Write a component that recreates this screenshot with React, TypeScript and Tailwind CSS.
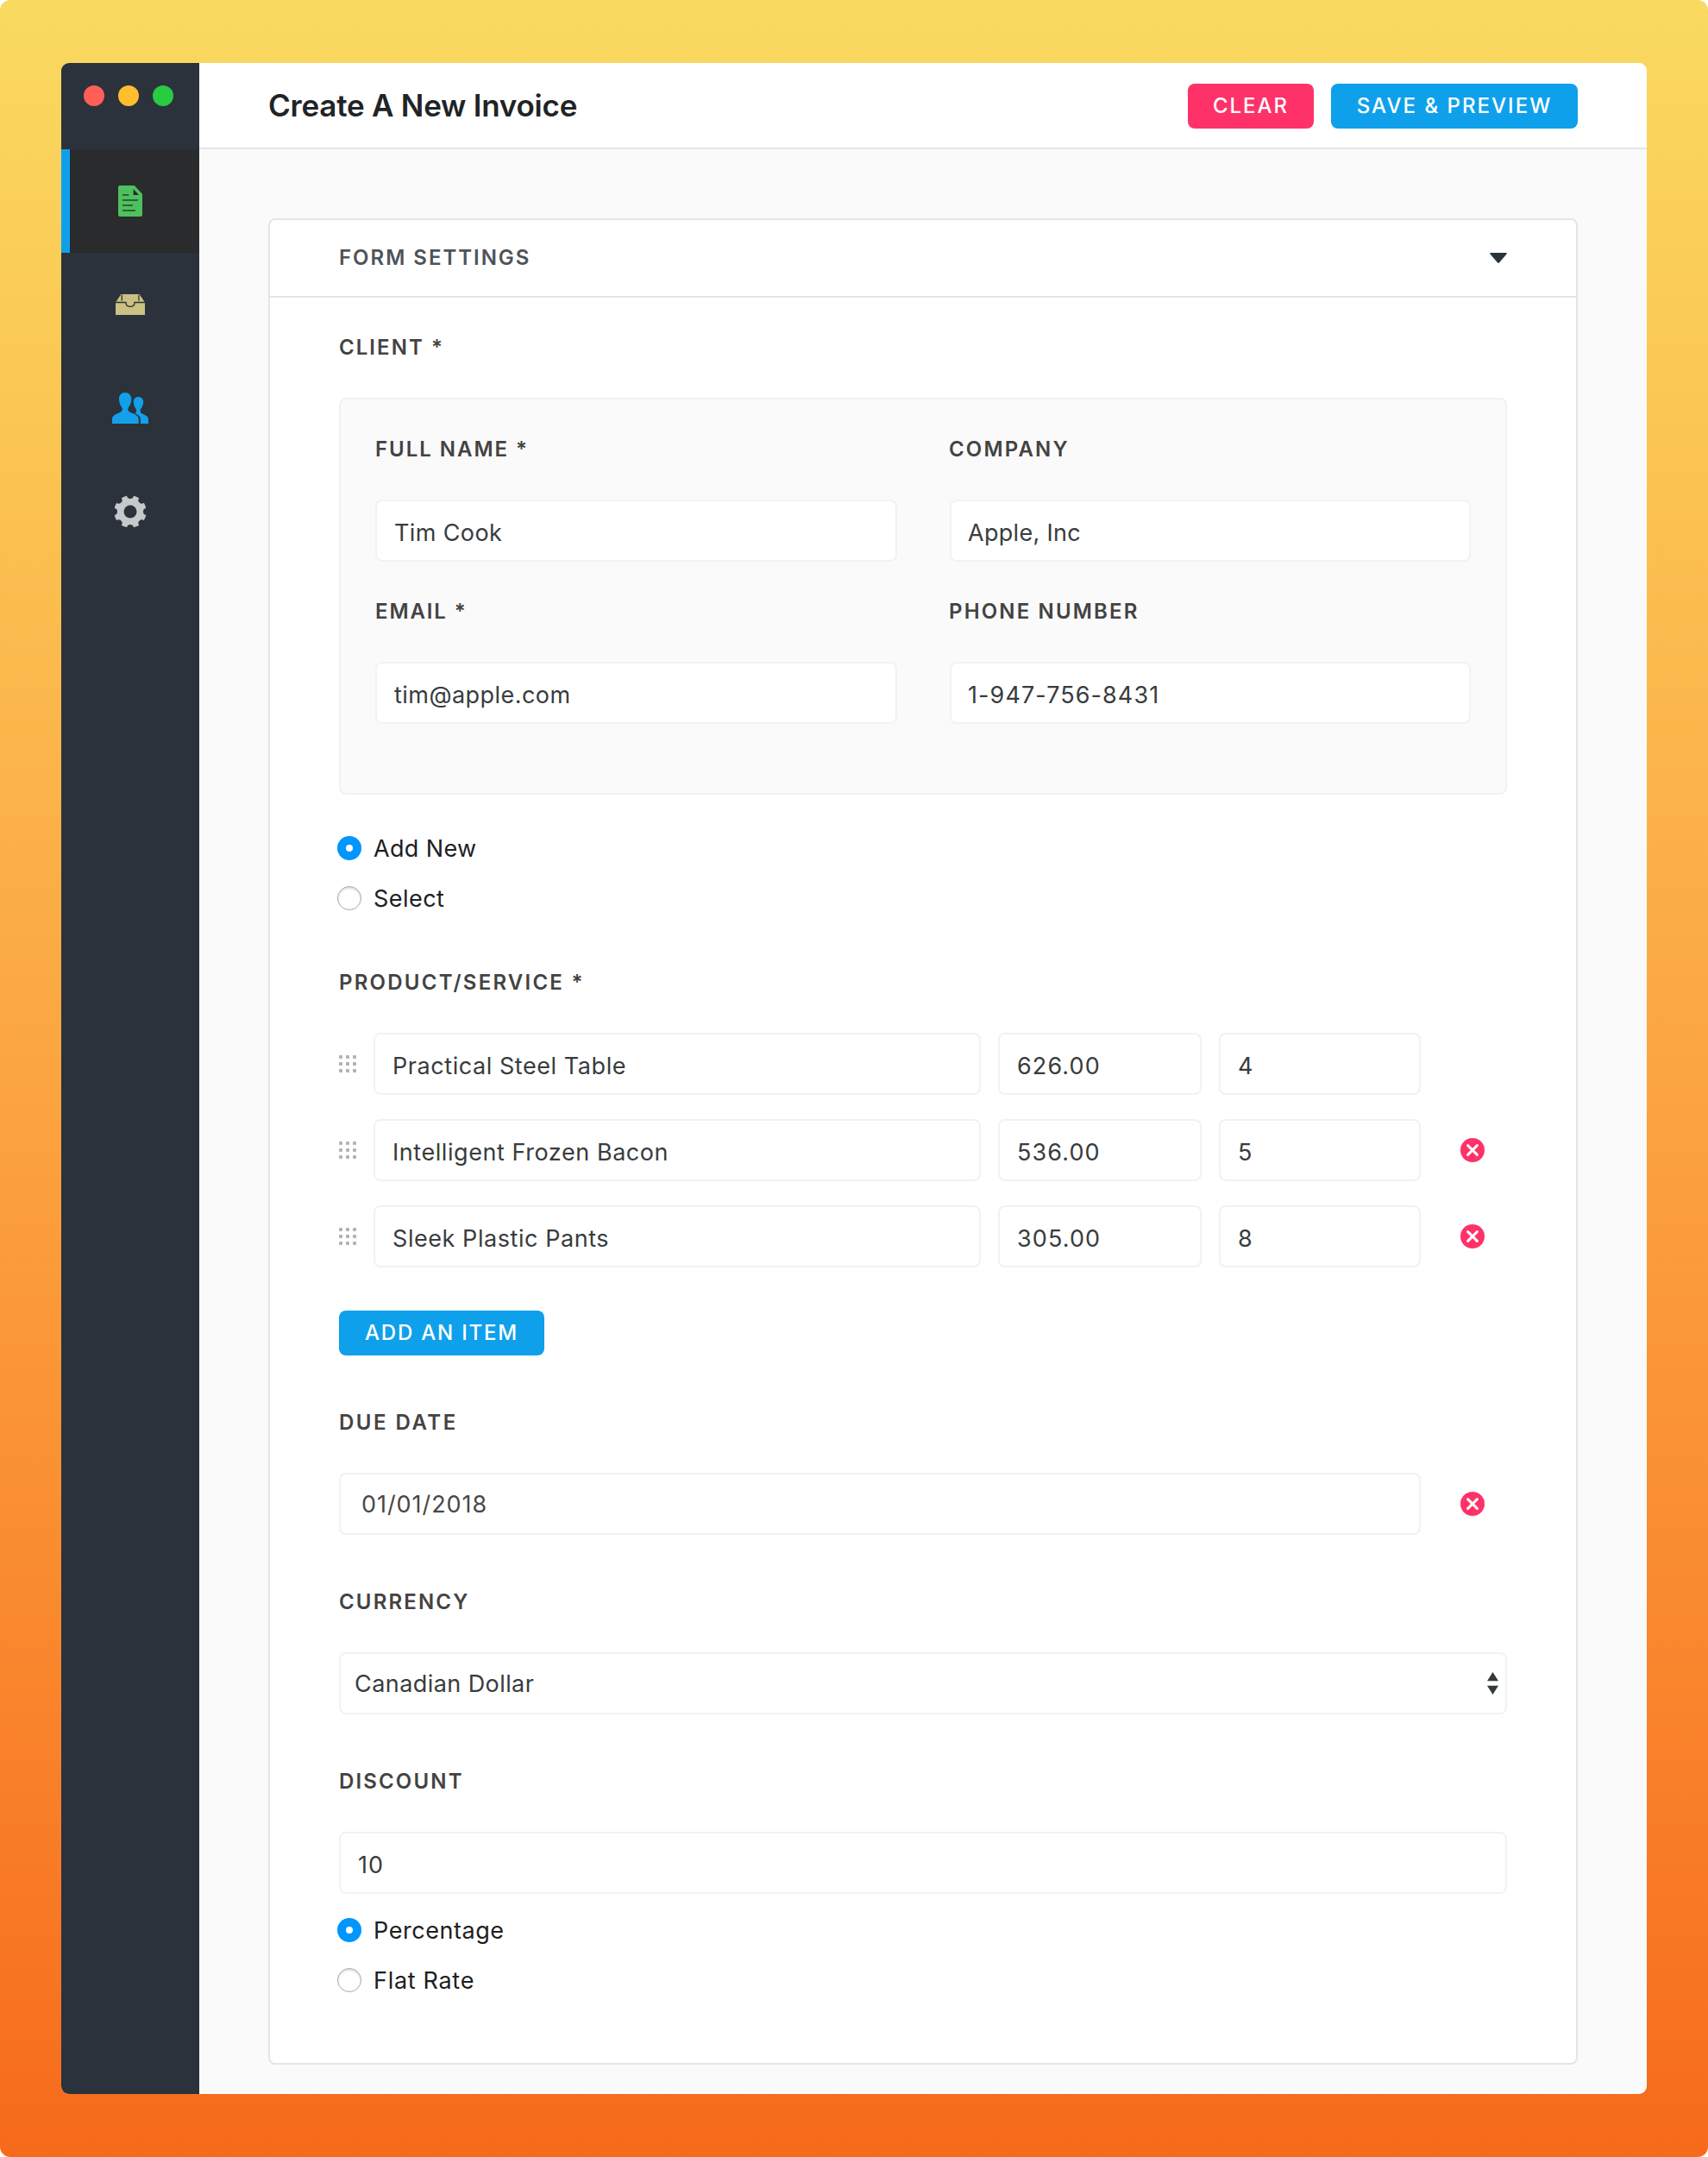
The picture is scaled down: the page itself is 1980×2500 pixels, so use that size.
import type { ReactNode } from 'react';
import clsx from 'clsx';

const ITEMS = [
  { id: 1, description: 'Practical Steel Table', price: '626.00', quantity: '4' },
  { id: 2, description: 'Intelligent Frozen Bacon', price: '536.00', quantity: '5' },
  { id: 3, description: 'Sleek Plastic Pants', price: '305.00', quantity: '8' },
];

const GEAR_NOTCHES = [0, 45, 90, 135, 180, 225, 270, 315];

function DocumentIcon() {
  return (
    <svg width="28" height="36" viewBox="0 0 28 36">
      <path
        d="M2 0H18.7L28 9.7V34a2 2 0 0 1-2 2H2a2 2 0 0 1-2-2V2a2 2 0 0 1 2-2z"
        fill="#4ec05e"
      />
      <path d="M17.6 4V11H24z" fill="#292b2c" />
      <path d="M5 11h7.3M5 17h18M5 23h12M5 29h15" stroke="#22442a" strokeWidth="1.3" fill="none" />
    </svg>
  );
}

function TrayIcon() {
  return (
    <svg width="34" height="24" viewBox="0 0 34 24">
      <path d="M6.4 0H27.6L34 9.5V24H0V9.5z" fill="#cac182" />
      <path
        d="M7.3 .8V7.4M26.9 .8V7.4M0 9.5H12C12 12.8 14.2 14.4 17 14.4S22 12.8 22 9.5H34"
        stroke="#2b323b"
        strokeWidth="1.3"
        fill="none"
      />
    </svg>
  );
}

function PeopleIcon() {
  return (
    <svg width="42" height="36" viewBox="0 0 42 36" fill="#12a0eb">
      <path d="M15 0C10.5 0 7.8 3 8 8.5C8.2 12.5 9.8 15.5 11.6 17.8C12 20.5 11.5 21.8 8.5 23.3C4.5 25 0 26.3 0 31V36H30.7V31C30.7 26.3 26 25 21.8 23.3C18.6 21.8 18.1 20.5 18.5 17.8C20.4 15.5 22 12.5 22.3 8.5C22.5 3 19.5 0 15 0Z" />
      <path d="M30.3 5C26.8 5 24.8 7.5 24.8 11C25 14.8 26.2 17 28 19.5C28.3 22 28 23.3 26.5 24.3C30 25.6 32.8 27.2 32.8 31V36H42V31.5C42 27.5 39 26.5 35.8 25C33 23.8 32.4 22.5 32.8 19.5C34.6 17 36 14.8 36.2 11C36.3 7.5 33.8 5 30.3 5Z" />
    </svg>
  );
}

function GearIcon() {
  return (
    <svg width="40" height="40" viewBox="-20 -20 40 40">
      <circle r="18.7" fill="#c4c9cb" />
      {GEAR_NOTCHES.map((angle) => (
        <circle key={angle} cy="-18.9" r="3.9" fill="#2b323b" transform={`rotate(${angle})`} />
      ))}
      <circle r="7.5" fill="#2b323b" />
    </svg>
  );
}

function RemoveButton() {
  return (
    <button className="size-7">
      <svg width="28" height="28" viewBox="0 0 28 28">
        <circle cx="14" cy="14" r="14" fill="#fe3269" />
        <path d="M8.6 8.6l10.8 10.8M19.4 8.6L8.6 19.4" stroke="#fff" strokeWidth="2.9" strokeLinecap="round" />
      </svg>
    </button>
  );
}

function DragHandle() {
  return (
    <div className="grid w-5 shrink-0 grid-cols-[4px_4px_4px] gap-1">
      {Array.from({ length: 9 }, (_, i) => (
        <span key={i} className="size-1 rounded-[1px] bg-[#b3b3b3]" />
      ))}
    </div>
  );
}

function TabItem({ active, children }: { active?: boolean; children: ReactNode }) {
  return (
    <a className={clsx('relative flex h-[120px] items-center justify-center', active && 'bg-[#292b2c]')}>
      {active && <span className="absolute inset-y-0 left-0 w-2.5 bg-[#0fa0eb]" />}
      {children}
    </a>
  );
}

function Button({ className, children }: { className: string; children: ReactNode }) {
  return (
    <button
      className={clsx(
        'flex h-[52px] items-center justify-center rounded-lg pb-px text-2xl font-medium whitespace-nowrap text-white',
        className
      )}
    >
      {children}
    </button>
  );
}

function Label({ className = 'tracking-[2.15px]', children }: { className?: string; children: ReactNode }) {
  return (
    <label className={clsx('mb-10 block h-[37px] pt-px text-2xl/9 font-semibold whitespace-nowrap text-[#434343]', className)}>
      {children}
    </label>
  );
}

function Field({ className, children }: { className?: string; children: ReactNode }) {
  return (
    <div
      className={clsx(
        'flex h-[72px] items-center rounded-lg border-2 border-[#f1f2f2] bg-white text-[27px] whitespace-nowrap text-[#383c3e]',
        className
      )}
    >
      {children}
    </div>
  );
}

function Radio({ checked, className, children }: { checked?: boolean; className: string; children: ReactNode }) {
  return (
    <label className={clsx('-ml-0.5 flex h-[58px] items-center gap-3.5 text-[27px] text-[#1d2022]', className)}>
      {checked ? (
        <span className="flex size-7 items-center justify-center rounded-full bg-[#0096fd]">
          <span className="size-2 rounded-full bg-white" />
        </span>
      ) : (
        <span className="size-7 rounded-full border border-[#a8a8a8] bg-white shadow-[inset_0_2px_2px_#dedede]" />
      )}
      <span className="pt-0.5">{children}</span>
    </label>
  );
}

function ClientFields() {
  return (
    <div className="grid h-[460px] grid-cols-[605px_605px] content-start gap-x-[60px] gap-y-[39px] rounded-lg border-2 border-[#f1f1f1] bg-[#fafafa] px-10 pt-[39px]">
      <div>
        <Label className="tracking-[1.97px]">FULL NAME *</Label>
        <Field className="px-5 pt-1.5 tracking-[0.38px]">Tim Cook</Field>
      </div>
      <div>
        <Label>COMPANY</Label>
        <Field className="ml-px px-[19px] pt-1.5 tracking-[0.3px]">Apple, Inc</Field>
      </div>
      <div>
        <Label className="tracking-[1.9px]">EMAIL *</Label>
        <Field className="px-5 pt-1.5 tracking-[0.46px]">tim@apple.com</Field>
      </div>
      <div>
        <Label>PHONE NUMBER</Label>
        <Field className="ml-px px-[19px] pt-1.5 tracking-[1.08px]">1-947-756-8431</Field>
      </div>
    </div>
  );
}

function ItemsList() {
  return (
    <div className="flex flex-col gap-7">
      {ITEMS.map((item, index) => (
        <div key={item.id} className="flex items-center gap-5">
          <DragHandle />
          <Field className="w-[704px] px-5 pt-1.5 tracking-[0.56px]">{item.description}</Field>
          <Field className="w-[236px] px-5 pt-1.5 tracking-[1.1px]">{item.price}</Field>
          <Field className="w-[234px] px-5 pt-1.5">{item.quantity}</Field>
          <div className="flex w-20 justify-center">{index > 0 && <RemoveButton />}</div>
        </div>
      ))}
    </div>
  );
}

export default function App() {
  return (
    <div className="flex h-[2500px] w-[1980px] rounded-xl bg-linear-to-b from-[#f9da60] to-[#f66a1b] pt-[73px] pl-[71px] font-['Inter',sans-serif]">
      <div className="flex h-[2354px] w-[1838px] overflow-hidden rounded-[9px] bg-[#fafafa]">
        <nav className="flex w-40 shrink-0 flex-col bg-[#2b323b]">
          <div className="flex h-[100px] justify-center gap-4 pt-[26px] pr-1">
            <span className="size-6 rounded-full bg-[#ff5f57]" />
            <span className="size-6 rounded-full bg-[#ffbe2f]" />
            <span className="size-6 rounded-full bg-[#28cb41]" />
          </div>
          <TabItem active>
            <DocumentIcon />
          </TabItem>
          <TabItem>
            <TrayIcon />
          </TabItem>
          <TabItem>
            <PeopleIcon />
          </TabItem>
          <TabItem>
            <GearIcon />
          </TabItem>
        </nav>

        <main className="flex-1">
          <header className="flex h-[100px] items-center justify-between border-b-2 border-[#e3e4e4] bg-white px-20 pt-0.5">
            <h1 className="pb-0.5 text-[35px] font-semibold tracking-[-0.23px] text-[#1f2427]">Create A New Invoice</h1>
            <div className="flex gap-5">
              <Button className="w-[146px] bg-[#fe3269] tracking-[2px]">CLEAR</Button>
              <Button className="w-[286px] bg-[#0fa0eb] tracking-[2.03px]">SAVE &amp; PREVIEW</Button>
            </div>
          </header>

          <section className="mx-20 mt-20 h-[2140px] rounded-lg border-2 border-[#e4e5e5] bg-white">
            <div className="flex h-[90px] items-center justify-between border-b-2 border-[#e4e5e5] px-20">
              <h2 className="text-2xl font-semibold tracking-[1.98px] text-[#4e5459]">FORM SETTINGS</h2>
              <svg width="20" height="12" viewBox="0 0 20 12">
                <path d="M1 0H19Q20.4 .2 19.5 1.6L10.9 11.5Q10 12.4 9.1 11.5L.5 1.6Q-.4 .2 1 0Z" fill="#29333a" />
              </svg>
            </div>

            <div className="px-20 pt-[39px]">
              <Label className="tracking-[2.05px]">CLIENT *</Label>
              <ClientFields />
              <div className="mt-[33px]">
                <Radio checked className="tracking-[0.35px]">Add New</Radio>
                <Radio className="tracking-[0.45px]">Select</Radio>
              </div>

              <div className="mt-[50px]">
                <Label className="tracking-[2.23px]">PRODUCT/SERVICE *</Label>
                <ItemsList />
                <Button className="mt-[50px] w-[238px] bg-[#0fa0eb] tracking-[1.8px]">ADD AN ITEM</Button>
              </div>

              <div className="mt-[59px]">
                <Label className="tracking-[2.5px]">DUE DATE</Label>
                <div className="flex items-center">
                  <Field className="w-[1254px] px-6 pt-0.5 tracking-[0.95px] text-[#484848]">01/01/2018</Field>
                  <div className="ml-[46px] flex">
                    <RemoveButton />
                  </div>
                </div>
              </div>

              <div className="mt-[59px]">
                <Label>CURRENCY</Label>
                <Field className="justify-between rounded-[10px] pr-2 pl-4 tracking-[0.43px]">
                  <span className="pt-0.5">Canadian Dollar</span>
                  <svg width="13" height="26" viewBox="0 0 13 26" fill="#333a3c">
                    <path d="M6.5 0L13 10.3H0zM0 15.7H13L6.5 26z" />
                  </svg>
                </Field>
              </div>

              <div className="mt-[59px]">
                <Label>DISCOUNT</Label>
                <Field className="px-5 pt-1.5 tracking-[1.1px]">10</Field>
                <div className="mt-[13px]">
                  <Radio checked className="tracking-[0.55px]">Percentage</Radio>
                  <Radio className="tracking-[0.7px]">Flat Rate</Radio>
                </div>
              </div>
            </div>
          </section>
        </main>
      </div>
    </div>
  );
}
